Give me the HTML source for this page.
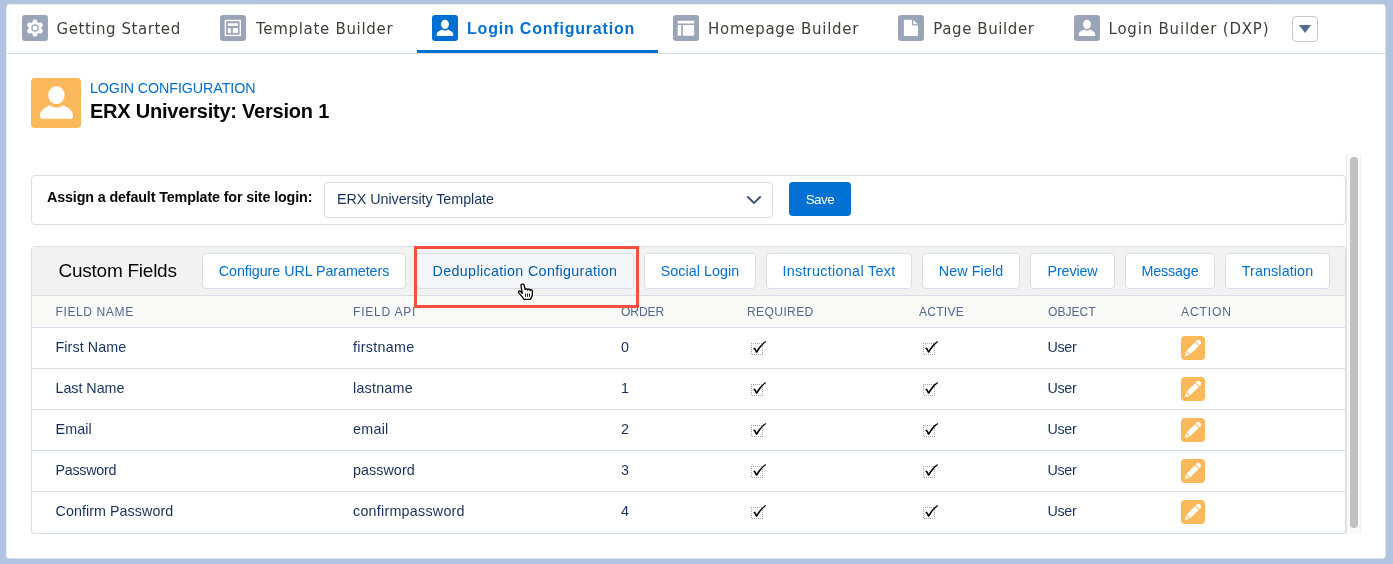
<!DOCTYPE html>
<html lang="en">
<head>
<meta charset="utf-8">
<title>Login Configuration</title>
<style>
*{box-sizing:border-box;margin:0;padding:0}
html,body{width:1393px;height:564px;overflow:hidden}
body{background:#b0c4df;font-family:"Liberation Sans",sans-serif;font-size:14.3px;color:#16325c;position:relative}
.root{position:absolute;left:0;top:0;width:1393px;height:564px;transform:translateZ(0)}
.card{position:absolute;left:0;top:0}
.tabline{position:absolute;left:7px;top:53px;width:1378px;height:1px;background:#d8dde6}
.tabul{position:absolute;left:417px;top:50px;width:241px;height:3px;background:#0070d2}
.tico{position:absolute;top:15px;width:26px;height:26px;border-radius:3px;background:#9aa5ba}
.tico.on{background:#0070d2}
.tico svg{position:absolute;left:0;top:0;width:26px;height:26px}
.tlab{position:absolute;top:18px;height:22px;line-height:22px;font-family:"DejaVu Sans","Liberation Sans",sans-serif;font-size:15px;color:#3e3e3c;white-space:nowrap}
.tlab.on{font-family:"Liberation Sans",sans-serif;font-size:16px;color:#0070d2;font-weight:bold}
.more{position:absolute;left:1292px;top:16px;width:26px;height:26px;border:1px solid #c9c7c5;border-radius:4px;background:#fff}
.more i{position:absolute;left:6px;top:8px;width:0;height:0;border-left:6px solid transparent;border-right:6px solid transparent;border-top:8px solid #54698d}
.hicon{position:absolute;left:31px;top:78px;width:50px;height:50px;border-radius:4px;background:#fcb95b}
.hsub{position:absolute;left:90px;top:79px;line-height:18px;font-size:14.3px;color:#0070d2;white-space:nowrap}
.htitle{position:absolute;left:90px;top:98px;line-height:26px;font-size:20px;font-weight:bold;color:#080707;white-space:nowrap}
.track{position:absolute;left:1346px;top:154px;width:15px;height:380px;background:#fafafa;border-left:1px solid #e8e8e8;border-right:1px solid #f0f0f0}
.thumb{position:absolute;left:1350px;top:157px;width:8px;height:371px;border-radius:4px;background:#c1c1c1}
.p1{position:absolute;left:31px;top:175px;width:1315px;height:50px;border:1px solid #d8dde6;border-radius:4px;background:#fff}
.lbl{position:absolute;left:47px;top:187px;line-height:20px;font-size:14.3px;font-weight:bold;color:#080707;white-space:nowrap}
.sel{position:absolute;left:324px;top:182px;width:449px;height:36px;border:1px solid #d8dde6;border-radius:4px;background:#fff}
.seltxt{position:absolute;left:337px;top:189px;line-height:20px;font-size:14.3px;color:#16325c;white-space:nowrap}
.sel svg{position:absolute;left:420.100px;top:11.800px}
.save{position:absolute;left:789px;top:182px;width:62px;height:34px;border-radius:4px;background:#0070d2}
.savel{position:absolute;left:789px;top:182px;width:62px;height:34px;color:#fff;text-align:center;line-height:35px;font-size:13.400px;white-space:nowrap}
.p2{position:absolute;left:31px;top:246px;width:1315px;height:288px;border:1px solid #d8dde6;border-radius:4px;background:#fff;box-shadow:0 2px 2px 0 rgba(0,0,0,.1);overflow:hidden}
.clip{position:absolute;left:25px;top:534px;width:1321px;height:5px;background:#fff}
.p2h{position:absolute;left:0;top:0;width:1313px;height:48px;background:#f3f2f2}
.ptitle{position:absolute;left:58.5px;top:258px;line-height:26px;font-size:19px;color:#080707;white-space:nowrap}
.btn{position:absolute;top:253px;height:36px;border:1px solid #d8dde6;border-radius:4px;background:#fff}
.btn.hov{background:#f4f6f9}
.btnl{position:absolute;top:253px;height:35px;color:#0070d2;text-align:center;line-height:37px;font-size:14.3px;white-space:nowrap}
.btnl.hov{color:#005fb2}
.red{position:absolute;left:414px;top:246px;width:225px;height:62px;border:3px solid #f4503f}
.thead{position:absolute;left:32px;top:295px;width:1313px;height:33px;background:#fafaf9;border-top:1px solid #d8dde6;border-bottom:1px solid #d8dde6}
.th{position:absolute;top:303px;line-height:18px;font-size:12.1px;color:#54698d;white-space:nowrap}
.rowline{position:absolute;left:32px;width:1313px;height:1px;background:#d8dde6}
.td{position:absolute;line-height:20px;font-size:14.3px;color:#16325c;white-space:nowrap}
.chk{position:absolute}
.edit{position:absolute;left:1181px;width:24px;height:24px;border-radius:4px;background:#fcb95b}
.edit svg{position:absolute;left:0;top:0}
.cursor{position:absolute;left:508px;top:278px}
</style>
</head>
<body>
<svg class="card" width="1393" height="564" viewBox="0 0 1393 564"><rect x="6.300" y="4.350" width="1379.150" height="554.050" rx="3.200" fill="#fff"/></svg>
<div class="tabline"></div>
<div class="tabul"></div>
<div class="tico" style="left:22px"><svg viewBox="0 0 26 26"><path d="M11.06 7.96 L11.94 5.47 L14.06 5.47 L14.94 7.96 L16.40 8.80 L18.99 8.32 L20.05 10.15 L18.33 12.16 L18.33 13.84 L20.05 15.85 L18.99 17.68 L16.40 17.20 L14.94 18.04 L14.06 20.53 L11.94 20.53 L11.06 18.04 L9.60 17.20 L7.01 17.68 L5.95 15.85 L7.67 13.84 L7.67 12.16 L5.95 10.15 L7.01 8.32 L9.60 8.80Z" fill="#fff" stroke="#fff" stroke-width="1.800" stroke-linejoin="round"/><circle cx="13" cy="13" r="3.100" fill="#fff" stroke="#9aa5ba" stroke-width="1.300"/></svg></div>
<div class="tico" style="left:220px"><svg viewBox="0 0 26 26"><rect x="5.400" y="5.500" width="14.900" height="14.900" fill="none" stroke="#fff" stroke-width="1.400"/><rect x="7.900" y="8.300" width="10.100" height="2.600" fill="#fff"/><rect x="7.900" y="13.200" width="3" height="4.800" fill="#fff"/><rect x="12.900" y="13.200" width="5.100" height="4.800" fill="#fff"/></svg></div>
<div class="tico on" style="left:432px"><svg viewBox="0 0 26 26"><ellipse cx="13" cy="9.300" rx="3.950" ry="4.600" fill="#fff"/><path fill="#fff" d="M4.700 20.200V19.300C4.700 17.300 7.500 15.900 10.200 14.600C11 15.300 12 15.700 13 15.700C14 15.700 15 15.300 15.800 14.600C18.500 15.900 21.300 17.300 21.300 19.300V20.200Q21.300 21 20.500 21H5.500Q4.700 21 4.700 20.200Z"/></svg></div>
<div class="tico" style="left:673px"><svg viewBox="0 0 26 26"><path fill="#fff" d="M5.500 5.650H20.400q.8 0 .8.800V8.550H4.700V6.450q0-.8.800-.8z"/><path fill="#fff" d="M4.700 10H8.300V20.800H5.500q-.8 0-.8-.8z"/><path fill="#fff" d="M9.900 10H21.200V20q0 .8-.8.800H9.900z"/></svg></div>
<div class="tico" style="left:898px"><svg viewBox="0 0 26 26"><path fill="#fff" d="M7 4.700H14V9.400q0 1 1 1H19.900V20q0 1.100-1.100 1.100H7q-1.100 0-1.100-1.100V5.800q0-1.100 1.100-1.100z"/><path fill="#fff" d="M15.300 4.800L19.800 9.200H15.800q-.5 0-.5-.5z"/></svg></div>
<div class="tico" style="left:1074px"><svg viewBox="0 0 26 26"><ellipse cx="13" cy="9.300" rx="3.950" ry="4.600" fill="#fff"/><path fill="#fff" d="M4.700 20.200V19.300C4.700 17.300 7.500 15.900 10.200 14.600C11 15.300 12 15.700 13 15.700C14 15.700 15 15.300 15.800 14.600C18.500 15.900 21.300 17.300 21.300 19.300V20.200Q21.300 21 20.500 21H5.500Q4.700 21 4.700 20.200Z"/></svg></div>
<div class="more"><i></i></div>
<div class="hicon"><svg width="50" height="50" viewBox="0 0 50 50"><ellipse cx="25.400" cy="17.100" rx="8.200" ry="9" fill="#fff"/><path fill="#fff" d="M9.100 38.500V37C9.100 33 13.500 29.600 18.800 27.200C20.500 28.800 23 29.600 25.500 29.600C28 29.600 30.500 28.800 32.200 27.200C37.500 29.600 42 33 42 37V38.500C42 39.800 41 40.700 39.800 40.700H11.300C10 40.700 9.100 39.800 9.100 38.500Z"/></svg></div>
<div class="track"></div>
<div class="thumb"></div>
<div class="p1"></div>
<div class="sel"><svg width="18" height="11" viewBox="0 0 18 11"><path d="M2.300 1.500l6.700 6.400 6.700-6.400" fill="none" stroke="#3e5277" stroke-width="1.900"/></svg></div>
<div class="save"></div>
<div class="p2"><div class="p2h"></div></div>
<div class="clip"></div>
<div class="btn" style="left:202px;width:204px"></div>
<div class="btn hov" style="left:416px;width:218px"></div>
<div class="btn" style="left:644px;width:112px"></div>
<div class="btn" style="left:766px;width:146px"></div>
<div class="btn" style="left:922px;width:98px"></div>
<div class="btn" style="left:1030px;width:85px"></div>
<div class="btn" style="left:1125px;width:90px"></div>
<div class="btn" style="left:1225px;width:105px"></div>
<div class="thead"></div>
<svg class="chk" style="left:750px;top:340px" width="17" height="16" viewBox="0 0 17 16"><path d="M1 3.500H13M1.500 3V15M2 14.500H13M12.500 4V15" fill="none" stroke="#a6a6a6" stroke-width="1" stroke-dasharray="1 1" shape-rendering="crispEdges"/><path fill="#000" d="M3 8.600L4.900 7.500C5.600 8.300 6.200 9.500 6.700 10.600C8.800 6.800 12 3.200 15.600 1.100L16 1.900C12.500 4.600 9.500 8.600 7.200 12.800L6 12.800C5.400 11.200 4.600 9.800 3.800 9Z"/></svg>
<svg class="chk" style="left:922px;top:340px" width="17" height="16" viewBox="0 0 17 16"><path d="M1 3.500H13M1.500 3V15M2 14.500H13M12.500 4V15" fill="none" stroke="#a6a6a6" stroke-width="1" stroke-dasharray="1 1" shape-rendering="crispEdges"/><path fill="#000" d="M3 8.600L4.900 7.500C5.600 8.300 6.200 9.500 6.700 10.600C8.800 6.800 12 3.200 15.600 1.100L16 1.900C12.500 4.600 9.500 8.600 7.200 12.800L6 12.800C5.400 11.200 4.600 9.800 3.800 9Z"/></svg>
<div class="edit" style="top:336px"><svg width="24" height="24" viewBox="0 0 24 24"><g transform="translate(3.900 20) rotate(-45)" fill="#fff"><path d="M0 0L3.900 -2.500V2.500Z"/><rect x="4.900" y="-2.600" width="12" height="5.200"/><path d="M17.900 -2.600H19.300Q21.600 -2.600 21.600 -.3V.3Q21.600 2.600 19.300 2.600H17.900Z"/></g></svg></div>
<div class="rowline" style="top:368px"></div>
<svg class="chk" style="left:750px;top:381px" width="17" height="16" viewBox="0 0 17 16"><path d="M1 3.500H13M1.500 3V15M2 14.500H13M12.500 4V15" fill="none" stroke="#a6a6a6" stroke-width="1" stroke-dasharray="1 1" shape-rendering="crispEdges"/><path fill="#000" d="M3 8.600L4.900 7.500C5.600 8.300 6.200 9.500 6.700 10.600C8.800 6.800 12 3.200 15.600 1.100L16 1.900C12.500 4.600 9.500 8.600 7.200 12.800L6 12.800C5.400 11.200 4.600 9.800 3.800 9Z"/></svg>
<svg class="chk" style="left:922px;top:381px" width="17" height="16" viewBox="0 0 17 16"><path d="M1 3.500H13M1.500 3V15M2 14.500H13M12.500 4V15" fill="none" stroke="#a6a6a6" stroke-width="1" stroke-dasharray="1 1" shape-rendering="crispEdges"/><path fill="#000" d="M3 8.600L4.900 7.500C5.600 8.300 6.200 9.500 6.700 10.600C8.800 6.800 12 3.200 15.600 1.100L16 1.900C12.500 4.600 9.500 8.600 7.200 12.800L6 12.800C5.400 11.200 4.600 9.800 3.800 9Z"/></svg>
<div class="edit" style="top:377px"><svg width="24" height="24" viewBox="0 0 24 24"><g transform="translate(3.900 20) rotate(-45)" fill="#fff"><path d="M0 0L3.900 -2.500V2.500Z"/><rect x="4.900" y="-2.600" width="12" height="5.200"/><path d="M17.900 -2.600H19.300Q21.600 -2.600 21.600 -.3V.3Q21.600 2.600 19.300 2.600H17.900Z"/></g></svg></div>
<div class="rowline" style="top:409px"></div>
<svg class="chk" style="left:750px;top:422px" width="17" height="16" viewBox="0 0 17 16"><path d="M1 3.500H13M1.500 3V15M2 14.500H13M12.500 4V15" fill="none" stroke="#a6a6a6" stroke-width="1" stroke-dasharray="1 1" shape-rendering="crispEdges"/><path fill="#000" d="M3 8.600L4.900 7.500C5.600 8.300 6.200 9.500 6.700 10.600C8.800 6.800 12 3.200 15.600 1.100L16 1.900C12.500 4.600 9.500 8.600 7.200 12.800L6 12.800C5.400 11.200 4.600 9.800 3.800 9Z"/></svg>
<svg class="chk" style="left:922px;top:422px" width="17" height="16" viewBox="0 0 17 16"><path d="M1 3.500H13M1.500 3V15M2 14.500H13M12.500 4V15" fill="none" stroke="#a6a6a6" stroke-width="1" stroke-dasharray="1 1" shape-rendering="crispEdges"/><path fill="#000" d="M3 8.600L4.900 7.500C5.600 8.300 6.200 9.500 6.700 10.600C8.800 6.800 12 3.200 15.600 1.100L16 1.900C12.500 4.600 9.500 8.600 7.200 12.800L6 12.800C5.400 11.200 4.600 9.800 3.800 9Z"/></svg>
<div class="edit" style="top:418px"><svg width="24" height="24" viewBox="0 0 24 24"><g transform="translate(3.900 20) rotate(-45)" fill="#fff"><path d="M0 0L3.900 -2.500V2.500Z"/><rect x="4.900" y="-2.600" width="12" height="5.200"/><path d="M17.900 -2.600H19.300Q21.600 -2.600 21.600 -.3V.3Q21.600 2.600 19.300 2.600H17.900Z"/></g></svg></div>
<div class="rowline" style="top:450px"></div>
<svg class="chk" style="left:750px;top:463px" width="17" height="16" viewBox="0 0 17 16"><path d="M1 3.500H13M1.500 3V15M2 14.500H13M12.500 4V15" fill="none" stroke="#a6a6a6" stroke-width="1" stroke-dasharray="1 1" shape-rendering="crispEdges"/><path fill="#000" d="M3 8.600L4.900 7.500C5.600 8.300 6.200 9.500 6.700 10.600C8.800 6.800 12 3.200 15.600 1.100L16 1.900C12.500 4.600 9.500 8.600 7.200 12.800L6 12.800C5.400 11.200 4.600 9.800 3.800 9Z"/></svg>
<svg class="chk" style="left:922px;top:463px" width="17" height="16" viewBox="0 0 17 16"><path d="M1 3.500H13M1.500 3V15M2 14.500H13M12.500 4V15" fill="none" stroke="#a6a6a6" stroke-width="1" stroke-dasharray="1 1" shape-rendering="crispEdges"/><path fill="#000" d="M3 8.600L4.900 7.500C5.600 8.300 6.200 9.500 6.700 10.600C8.800 6.800 12 3.200 15.600 1.100L16 1.900C12.500 4.600 9.500 8.600 7.200 12.800L6 12.800C5.400 11.200 4.600 9.800 3.800 9Z"/></svg>
<div class="edit" style="top:459px"><svg width="24" height="24" viewBox="0 0 24 24"><g transform="translate(3.900 20) rotate(-45)" fill="#fff"><path d="M0 0L3.900 -2.500V2.500Z"/><rect x="4.900" y="-2.600" width="12" height="5.200"/><path d="M17.900 -2.600H19.300Q21.600 -2.600 21.600 -.3V.3Q21.600 2.600 19.300 2.600H17.900Z"/></g></svg></div>
<div class="rowline" style="top:491px"></div>
<svg class="chk" style="left:750px;top:504px" width="17" height="16" viewBox="0 0 17 16"><path d="M1 3.500H13M1.500 3V15M2 14.500H13M12.500 4V15" fill="none" stroke="#a6a6a6" stroke-width="1" stroke-dasharray="1 1" shape-rendering="crispEdges"/><path fill="#000" d="M3 8.600L4.900 7.500C5.600 8.300 6.200 9.500 6.700 10.600C8.800 6.800 12 3.200 15.600 1.100L16 1.900C12.500 4.600 9.500 8.600 7.200 12.800L6 12.800C5.400 11.200 4.600 9.800 3.800 9Z"/></svg>
<svg class="chk" style="left:922px;top:504px" width="17" height="16" viewBox="0 0 17 16"><path d="M1 3.500H13M1.500 3V15M2 14.500H13M12.500 4V15" fill="none" stroke="#a6a6a6" stroke-width="1" stroke-dasharray="1 1" shape-rendering="crispEdges"/><path fill="#000" d="M3 8.600L4.900 7.500C5.600 8.300 6.200 9.500 6.700 10.600C8.800 6.800 12 3.200 15.600 1.100L16 1.900C12.500 4.600 9.500 8.600 7.200 12.800L6 12.800C5.400 11.200 4.600 9.800 3.800 9Z"/></svg>
<div class="edit" style="top:500px"><svg width="24" height="24" viewBox="0 0 24 24"><g transform="translate(3.900 20) rotate(-45)" fill="#fff"><path d="M0 0L3.900 -2.500V2.500Z"/><rect x="4.900" y="-2.600" width="12" height="5.200"/><path d="M17.900 -2.600H19.300Q21.600 -2.600 21.600 -.3V.3Q21.600 2.600 19.300 2.600H17.900Z"/></g></svg></div>
<div class="root">
<div class="tlab" style="left:56.5px;letter-spacing:0.55px">Getting Started</div>
<div class="tlab" style="left:256px;letter-spacing:0.69px">Template Builder</div>
<div class="tlab on" style="left:467px;letter-spacing:0.8px">Login Configuration</div>
<div class="tlab" style="left:708px;letter-spacing:0.72px">Homepage Builder</div>
<div class="tlab" style="left:933.3px;letter-spacing:0.59px">Page Builder</div>
<div class="tlab" style="left:1108.5px;letter-spacing:0.8px">Login Builder (DXP)</div>
<div class="hsub" style="letter-spacing:-0.1px">LOGIN CONFIGURATION</div>
<div class="htitle" style="letter-spacing:-0.22px">ERX University: Version 1</div>
<div class="lbl" style="letter-spacing:-0.13px">Assign a default Template for site login:</div>
<div class="seltxt" style="letter-spacing:-0.04px">ERX University Template</div>
<div class="savel" style="letter-spacing:-0.45px">Save</div>
<div class="ptitle" style="letter-spacing:-0.25px">Custom Fields</div>
<div class="btnl" style="left:202px;width:204px;letter-spacing:-0.06px">Configure URL Parameters</div>
<div class="btnl hov" style="left:416px;width:218px;letter-spacing:0.34px">Deduplication Configuration</div>
<div class="btnl" style="left:644px;width:112px;letter-spacing:0.06px">Social Login</div>
<div class="btnl" style="left:766px;width:146px;letter-spacing:0.34px">Instructional Text</div>
<div class="btnl" style="left:922px;width:98px;letter-spacing:0.11px">New Field</div>
<div class="btnl" style="left:1030px;width:85px;letter-spacing:-0.15px">Preview</div>
<div class="btnl" style="left:1125px;width:90px;letter-spacing:-0.15px">Message</div>
<div class="btnl" style="left:1225px;width:105px;letter-spacing:0.11px">Translation</div>
<div class="th" style="left:55.5px;letter-spacing:0.57px">FIELD NAME</div>
<div class="th" style="left:353px;letter-spacing:0.74px">FIELD API</div>
<div class="th" style="left:621px;letter-spacing:-0.1px">ORDER</div>
<div class="th" style="left:747px;letter-spacing:0.36px">REQUIRED</div>
<div class="th" style="left:919px;letter-spacing:0.22px">ACTIVE</div>
<div class="th" style="left:1048px;letter-spacing:-0.02px">OBJECT</div>
<div class="th" style="left:1181px;letter-spacing:0.88px">ACTION</div>
<div class="td" style="left:55.5px;top:337px;letter-spacing:0.1px">First Name</div>
<div class="td" style="left:353px;top:337px;letter-spacing:0.29px">firstname</div>
<div class="td" style="left:621px;top:337px">0</div>
<div class="td" style="left:1047.5px;top:337px;letter-spacing:-0.3px">User</div>
<div class="td" style="left:55.5px;top:378px;letter-spacing:-0.03px">Last Name</div>
<div class="td" style="left:353px;top:378px;letter-spacing:0.23px">lastname</div>
<div class="td" style="left:621px;top:378px">1</div>
<div class="td" style="left:1047.5px;top:378px;letter-spacing:-0.3px">User</div>
<div class="td" style="left:55.5px;top:419px;letter-spacing:0.11px">Email</div>
<div class="td" style="left:353px;top:419px;letter-spacing:0.28px">email</div>
<div class="td" style="left:621px;top:419px">2</div>
<div class="td" style="left:1047.5px;top:419px;letter-spacing:-0.3px">User</div>
<div class="td" style="left:55.5px;top:460px;letter-spacing:-0.27px">Password</div>
<div class="td" style="left:353px;top:460px;letter-spacing:0.07px">password</div>
<div class="td" style="left:621px;top:460px">3</div>
<div class="td" style="left:1047.5px;top:460px;letter-spacing:-0.3px">User</div>
<div class="td" style="left:55.5px;top:501px;letter-spacing:0.06px">Confirm Password</div>
<div class="td" style="left:353px;top:501px;letter-spacing:0.25px">confirmpassword</div>
<div class="td" style="left:621px;top:501px">4</div>
<div class="td" style="left:1047.5px;top:501px;letter-spacing:-0.3px">User</div>
</div>
<div class="red"></div>
<svg class="cursor" width="36" height="28" viewBox="0 0 36 28"><path d="M14.400 6.200C15.300 5.900 16 6.400 16.200 7.300L17.200 11.600C17.600 10.600 19.200 10.500 19.500 11.600L19.600 12C20 10.800 21.800 10.800 22 12L22.100 12.500C22.600 11.400 24.300 11.600 24.400 12.800L24.300 16.800C24.200 18.500 23 19.800 22.500 21.300L16 21.300C14.500 19 12.500 16.800 10.800 14.900C9.800 13.700 11.200 12.400 12.300 13.300L14.300 15.200L13 7.800C12.800 6.800 13.500 6.300 14.400 6.200Z" fill="#fff" stroke="#000" stroke-width="1.300" stroke-linejoin="round"/><path d="M17.500 15.600V18.800M19.500 15.600V18.800M21.500 15.600V18.800" stroke="#000" stroke-width="0.900" fill="none"/></svg>
</body>
</html>
